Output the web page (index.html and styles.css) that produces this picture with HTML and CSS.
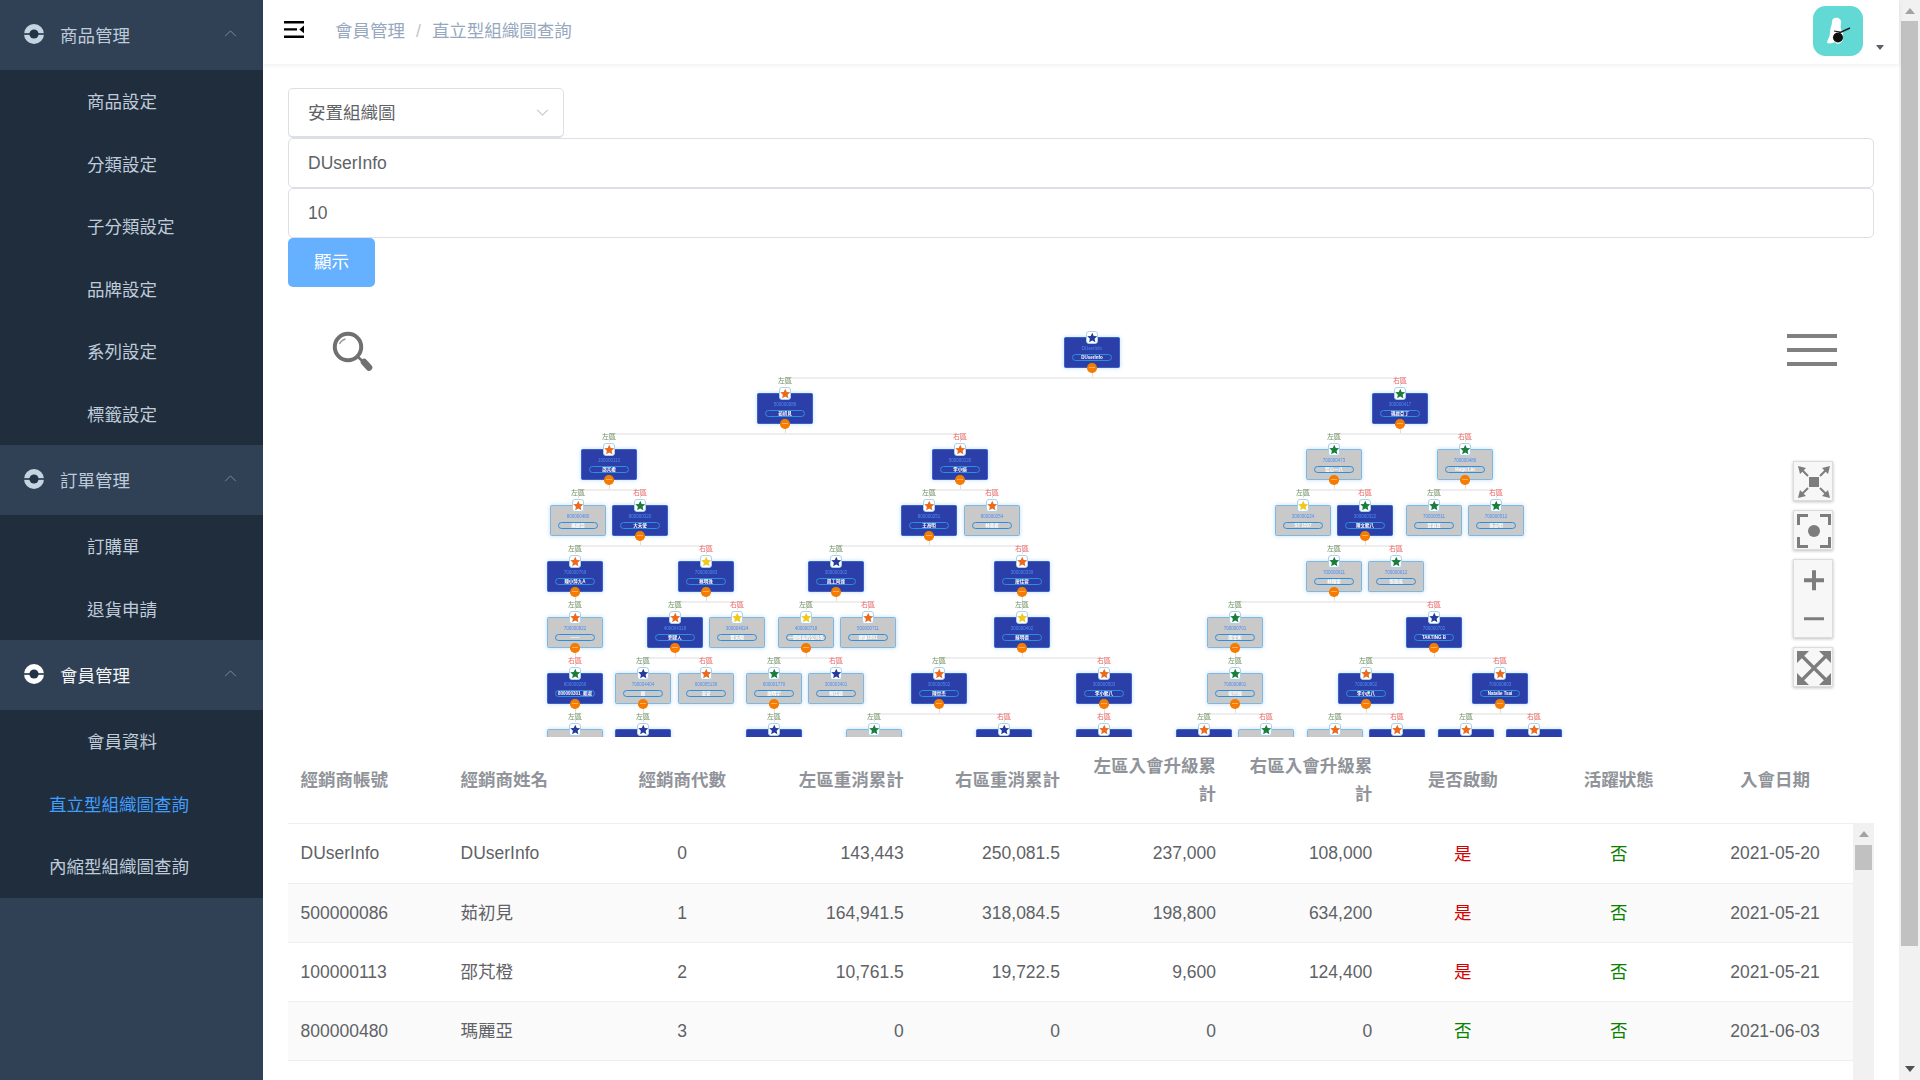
FILE: index.html
```html
<!DOCTYPE html>
<html lang="zh-Hant">
<head>
<meta charset="utf-8">
<title>直立型組織圖查詢</title>
<link rel="stylesheet" href="styles.css">
</head>
<body>
<div class="app">
  <aside class="sidebar">
    <div class="menu-title"><svg class="help" viewBox="0 0 20 20"><use href="#ring"/></svg><span>商品管理</span><svg class="chev" viewBox="0 0 14 8"><path d="M1 7l6-6 6 6"/></svg></div>
    <ul class="submenu">
      <li>商品設定</li><li>分類設定</li><li>子分類設定</li><li>品牌設定</li><li>系列設定</li><li>標籤設定</li>
    </ul>
    <div class="menu-title"><svg class="help" viewBox="0 0 20 20"><use href="#ring"/></svg><span>訂單管理</span><svg class="chev" viewBox="0 0 14 8"><path d="M1 7l6-6 6 6"/></svg></div>
    <ul class="submenu">
      <li>訂購單</li><li>退貨申請</li>
    </ul>
    <div class="menu-title current"><svg class="help" viewBox="0 0 20 20"><use href="#ring"/></svg><span>會員管理</span><svg class="chev" viewBox="0 0 14 8"><path d="M1 7l6-6 6 6"/></svg></div>
    <ul class="submenu">
      <li>會員資料</li><li class="wide active">直立型組織圖查詢</li><li class="wide">內縮型組織圖查詢</li>
    </ul>
  </aside>

  <div class="main">
    <header class="navbar">
      <svg class="hamburger" viewBox="0 0 20 17"><path d="M0 0h20v2.400H0zM0 7.200h13v2.400H0zM0 14.600h20V17H0z"/><path d="M20 4.600v7.600l-4.600-3.800z"/></svg>
      <nav class="crumbs"><span>會員管理</span><i>/</i><span>直立型組織圖查詢</span></nav>
      <div class="user">
        <div class="avatar">
          <svg viewBox="0 0 50 50"><path d="M22 12C26 11 29 14 28 18C27 21 28 24 30 27L30 34C28 38 24 39 22 36C20 37 17 38 14 37C14 34 17 31 17 27C17 22 19 19 19 16C19 14 20 12 22 12z" fill="#fff"/><circle cx="25" cy="31.500" r="5" fill="#111"/><path d="M26 27l11-5" stroke="#222" stroke-width="1.400"/><path d="M21 25l6 1" stroke="#111" stroke-width="1.200"/></svg>
        </div>
        <i class="caret"></i>
      </div>
    </header>

    <section class="content">
      <form class="filters">
        <div class="field select"><span class="select-text">安置組織圖</span><svg class="down" viewBox="0 0 14 8"><path d="M1 1l6 6 6-6"/></svg></div>
        <div class="field">DUserInfo</div>
        <div class="field">10</div>
        <button type="button" class="btn">顯示</button>
      </form>

      <div class="chart">
        <div class="tree" id="tree"></div>
        <svg class="search" viewBox="0 0 44 44"><circle cx="17" cy="17" r="13.200" fill="none" stroke="#707070" stroke-width="4"/><path d="M8.500 14a9 9 0 0 1 6-5" fill="none" stroke="#999" stroke-width="1.400"/><path d="M27 27l6 5.500" stroke="#707070" stroke-width="2.600"/><path d="M33 32l5 5.500" stroke="#707070" stroke-width="6.600" stroke-linecap="round"/></svg>
        <div class="bars"><i></i><i></i><i></i></div>
        <div class="tools">
          <div class="tool"><svg viewBox="0 0 38 38"><rect x="15" y="15" width="10" height="10"/><g stroke="#7d7d7d" stroke-width="2"><path d="M8 8l6 6M32 8l-6 6M8 32l6-6M32 32l-6-6"/></g><path d="M4 4l8 2-6 6zM36 4l-2 8-6-6zM4 36l2-8 6 6zM36 36l-8-2 6-6z"/></svg></div>
          <div class="tool"><svg viewBox="0 0 38 38"><circle cx="20" cy="20" r="6"/><path d="M3 3h11v3H6v8H3zM37 3v11h-3V6h-8V3zM3 37V26h3v8h8v3zM37 37H26v-3h8v-8h3z"/></svg></div>
          <div class="tool-pair">
            <svg viewBox="0 0 38 38"><path d="M18 10h4v8h8v4h-8v8h-4v-8h-8v-4h8z"/></svg>
            <svg viewBox="0 0 38 38"><path d="M10 18h20v3H10z"/></svg>
          </div>
          <div class="tool"><svg viewBox="0 0 38 38"><path d="M5 5l30 30M35 5L5 35" stroke="#7d7d7d" stroke-width="3.200"/><path d="M3 3h12L3 15zM37 3v12L25 3zM3 37V25l12 12zM37 37H25l12-12z"/></svg></div>
        </div>
      </div>

      <div class="table-wrap">
        <table class="grid">
          <colgroup><col class="c-first"><col><col><col><col><col><col><col><col><col></colgroup>
          <thead>
            <tr><th>經銷商帳號</th><th>經銷商姓名</th><th class="mid">經銷商代數</th><th class="end">左區重消累計</th><th class="end">右區重消累計</th><th class="end">左區入會升級累計</th><th class="end">右區入會升級累計</th><th class="mid">是否啟動</th><th class="mid">活躍狀態</th><th class="mid">入會日期</th></tr>
          </thead>
          <tbody>
            <tr class="first"><td>DUserInfo</td><td>DUserInfo</td><td class="mid">0</td><td class="end">143,443</td><td class="end">250,081.5</td><td class="end">237,000</td><td class="end">108,000</td><td class="mid yes">是</td><td class="mid no">否</td><td class="mid">2021-05-20</td></tr>
            <tr class="alt"><td>500000086</td><td class="han">茹初見</td><td class="mid">1</td><td class="end">164,941.5</td><td class="end">318,084.5</td><td class="end">198,800</td><td class="end">634,200</td><td class="mid yes">是</td><td class="mid no">否</td><td class="mid">2021-05-21</td></tr>
            <tr><td>100000113</td><td class="han">邵芃橙</td><td class="mid">2</td><td class="end">10,761.5</td><td class="end">19,722.5</td><td class="end">9,600</td><td class="end">124,400</td><td class="mid yes">是</td><td class="mid no">否</td><td class="mid">2021-05-21</td></tr>
            <tr class="alt"><td>800000480</td><td class="han">瑪麗亞</td><td class="mid">3</td><td class="end">0</td><td class="end">0</td><td class="end">0</td><td class="end">0</td><td class="mid no">否</td><td class="mid no">否</td><td class="mid">2021-06-03</td></tr>
          </tbody>
        </table>
        <div class="mini-scroll"><b class="up"></b><span class="mini-thumb"></span></div>
      </div>
    </section>
  </div>

  <div class="page-scroll"><b class="up"></b><span class="thumb"></span><b class="dn"></b></div>
</div>

<svg class="defs" width="0" height="0"><defs>
  <g id="ring"><circle cx="10" cy="10" r="10" fill="currentColor"/><circle cx="10" cy="10" r="4.600" fill="#243447"/><path d="M0 9.200h20v1.600H0z" fill="#243447"/></g>
</defs></svg>
<script src="app.js"></script>
</body>
</html>
```
FILE: styles.css
```css
* { box-sizing: border-box; }
html, body { margin: 0; height: 100%; overflow: hidden; }
body { font: 17.5px "Liberation Sans", "Noto Sans CJK TC", sans-serif; color: #606266; background: #fff; }
.app { display: flex; height: 1080px; }
.defs { position: absolute; }

.sidebar { width: 263px; flex: none; background: #304156; color: #bfcbd9; }
.menu-title { height: 70px; display: flex; align-items: center; padding: 0 26px 2px 24px; gap: 16px; background: #304156; }
.menu-title.current { color: #f4f4f5; }
.help { width: 20px; height: 20px; color: #c6d3e0; flex: none; }
.current .help { color: #fff; }
.chev { width: 13px; height: 7px; margin-left: auto; margin-top: -2px; fill: none; stroke: #7f8b98; stroke-width: 1.1; }
.submenu { list-style: none; margin: 0; padding: 0; background: #1f2d3d; }
.submenu li { height: 62.5px; line-height: 64px; padding-left: 87px; }
.submenu li.wide { padding-left: 49px; }
.submenu li.active { color: #409eff; }

.main { flex: 1; min-width: 0; display: flex; flex-direction: column; }
.navbar { height: 64px; flex: none; display: flex; align-items: center; padding-left: 21px; box-shadow: 0 1px 5px rgba(0,21,41,.08); position: relative; z-index: 2; }
.hamburger { width: 20px; height: 17px; margin-top: -5px; flex: none; }
.crumbs { margin-left: 31px; display: flex; align-items: baseline; gap: 11px; color: #97a8be; margin-top: -5px; }
.crumbs i { font-style: normal; color: #c0c4cc; }
.user { margin-left: auto; display: flex; align-items: flex-end; margin-right: 15.5px; height: 50px; margin-top: -3px; }
.avatar { width: 50px; height: 50px; border-radius: 12.5px; background: #62d9d5; overflow: hidden; }
.avatar svg { display: block; width: 50px; height: 50px; }
.caret { width: 0; height: 0; margin: 0 0 6px 12.5px; border: 4.5px solid transparent; border-top: 5.5px solid #5a5e66; border-bottom: 0; }

.content { flex: 1; min-height: 0; padding: 24px 25.5px 0 25px; display: flex; flex-direction: column; }
.filters { display: flex; flex-direction: column; align-items: flex-start; flex: none; }
.field { width: 100%; height: 50px; border: 1px solid #dcdfe6; border-radius: 5px; padding: 0 19px; line-height: 48px; background: #fff; }
.field.select { width: 276px; display: flex; align-items: center; justify-content: space-between; padding-right: 14px; line-height: normal; border-bottom-width: 2px; }
.select-text { padding-bottom: 2px; }
.down { width: 13px; height: 7px; fill: none; stroke: #c0c4cc; stroke-width: 1.2; }
.btn { width: 87px; height: 49px; border: 0; border-radius: 5px; background: #66b1ff; color: #fff; font: inherit; padding: 0 0 4px; }

.chart { position: relative; height: 450px; flex: none; overflow: hidden; }
.tree { position: absolute; inset: 0; filter: blur(.35px); }
.link { position: absolute; background: #eeeeee; }
.link.drop { background: #dedede; }
.node { position: absolute; width: 56.5px; height: 31px; border-radius: 1.5px; color: #fff; text-align: center; box-shadow: 0 0 4px rgba(64,158,255,.35); }
.node.on { background: #2c3fa8; border: 1px solid #3a62c4; }
.node.off { background: #c9c9c9; border: 1px solid #7fb8dc; }
.code { position: absolute; left: 0; right: 0; top: 8px; font-size: 4.5px; line-height: 6px; color: #4d8df0; }
.name { position: absolute; left: 7.5px; right: 7.5px; top: 15.5px; height: 7.5px; border: 1px solid #2b8fe0; border-radius: 4px; font-size: 4.5px; font-weight: 700; line-height: 5.5px; white-space: nowrap; overflow: hidden; }
.badge { position: absolute; width: 12.5px; height: 12.5px; left: 21px; top: -7px; background: #fff; border: 1px solid #a9d2ea; border-radius: 3px; display: flex; align-items: center; justify-content: center; }
.badge svg { width: 11px; height: 11px; display: block; }
.node-label { position: absolute; width: 20px; left: 17.25px; top: -19px; font-size: 7px; line-height: 12px; text-align: center; }
.node-label.l { color: #6b8f5e; }
.node-label.r { color: #ee6060; }
.toggle { position: absolute; width: 9.5px; height: 9.5px; left: 22.5px; bottom: -5.5px; border-radius: 50%; background: #f57c00; }
.toggle::after { content: ""; position: absolute; left: 2px; right: 2px; top: 4.2px; height: 1px; background: #ffb066; }

.search { position: absolute; left: 43px; top: 43px; width: 44px; height: 44px; }
.bars { position: absolute; left: 1499px; top: 47px; width: 50px; display: flex; flex-direction: column; gap: 10.5px; }
.bars i { display: block; height: 3.5px; background: #808080; }
.tools { position: absolute; left: 1505px; top: 174px; display: flex; flex-direction: column; }
.tool, .tool-pair { width: 40px; background: #f7f7f7; border: 1px solid #dcdcdc; box-shadow: 0 1px 3px rgba(0,0,0,.25); }
.tool { height: 40px; margin-bottom: 9px; }
.tool-pair { height: 79px; margin-bottom: 9px; }
.tool svg, .tool-pair svg { display: block; width: 38px; height: 38px; fill: #7d7d7d; }
.tool-pair svg { height: 38.5px; }

.table-wrap { position: relative; flex: 1; min-height: 0; overflow: hidden; }
.grid { width: 1565px; table-layout: fixed; border-collapse: collapse; }
.c-first { width: 160px; }
.grid th, .grid td { padding: 0 12.5px; border-bottom: 1px solid #ebeef5; font-weight: 400; vertical-align: middle; text-align: left; }
.grid th { height: 86.3px; color: #909399; font-weight: 700; line-height: 28px; }
.grid td { height: 59px; padding-top: 1px; }
.grid .first td { height: 60px; }
.grid .alt td { background: #fafafa; }
.grid .mid { text-align: center; }
.grid .end { text-align: right; }
.grid .yes, .grid .no, .grid .han { padding-top: 0; padding-bottom: 2px; }
.grid .yes { color: #d60000; }
.grid .no { color: #0a8000; }

.mini-scroll { position: absolute; left: 1565px; top: 86px; bottom: 0; width: 21px; background: #f1f1f1; display: flex; flex-direction: column; align-items: center; }
.mini-thumb { width: 17px; height: 25px; margin-top: 8px; background: #c1c1c1; }
.up, .dn { display: block; width: 0; height: 0; border: 5px solid transparent; }
.up { border-top: 0; border-bottom: 6px solid #a3a3a3; }
.mini-scroll .up { margin-top: 8px; }
.page-scroll { width: 21px; flex: none; background: #f1f1f1; display: flex; flex-direction: column; align-items: center; position: relative; }
.page-scroll .up { margin-top: 8px; }
.thumb { width: 17px; height: 925px; margin-top: 7px; background: #c1c1c1; }
.dn { position: absolute; bottom: 8px; border-bottom: 0; border-top: 6px solid #505050; }
```
FILE: app.js
```js
// row, centre x, parent x, tone (on/off), star, side, code, name
var NODES = [
  [0,1092,0,'on','n','','DUserInfo','DUserInfo'],
  [1,785,1092,'on','o','l','500000086','茹初見'],
  [1,1400,1092,'on','g','r','300000417','瑪麗亞丁'],
  [2,609,785,'on','o','l','100000113','邵芃橙'],
  [2,960,785,'on','o','r','500000130','李小娟'],
  [2,1334,1400,'off','g','l','700000473','葉心一八'],
  [2,1465,1400,'off','g','r','700000480','Hugo Liu'],
  [3,578,609,'off','o','l','800000480','瑪麗亞'],
  [3,640,609,'on','g','r','800000320','大天使'],
  [3,929,960,'on','o','l','800000251','王海明'],
  [3,992,960,'off','o','r','800000254','林美君'],
  [3,1303,1334,'off','y','l','300000224','ST 1507'],
  [3,1365,1334,'on','g','r','300000322','陳文龍八'],
  [3,1434,1465,'off','g','l','700000511','黃淑真'],
  [3,1496,1465,'off','g','r','700000512','吳志明'],
  [4,575,640,'on','o','l','700000769','陳小萍九A'],
  [4,706,640,'on','y','r','700000083','蔡明珠'],
  [4,836,929,'on','n','l','300000302','鳳工阿達'],
  [4,1022,929,'on','o','r','300000330','廖佳蓉'],
  [4,1334,1365,'off','g','l','700000611','林雅雯'],
  [4,1396,1365,'off','g','r','700000612','張育成'],
  [5,575,575,'off','o','l','700000822','——'],
  [5,675,706,'on','o','l','400004318','劉建人'],
  [5,737,706,'off','y','r','300004024','雷天翔'],
  [5,806,836,'off','y','l','400000718','一個很長的公司名'],
  [5,868,836,'off','o','r','500000711','健康1801'],
  [5,1022,1022,'on','y','l','300000402','蘇明德'],
  [5,1235,1334,'off','g','l','700000701','周文彬'],
  [5,1434,1334,'on','n','r','700000702','TAKTING B'],
  [6,575,575,'on','g','r','800000266','800000301_賴淑'],
  [6,643,675,'off','n','l','700004404','蘇'],
  [6,706,675,'off','o','r','600005136','安安'],
  [6,774,806,'off','g','l','600001770','謝明宇'],
  [6,836,806,'off','n','r','300003401','蔡佳穎'],
  [6,939,1022,'on','o','l','300000502','陳世杰'],
  [6,1104,1022,'on','o','r','300000503','李小龍八'],
  [6,1235,1235,'off','g','l','700000801','楊宗翰'],
  [6,1366,1434,'on','o','l','700000802','李小虎八'],
  [6,1500,1434,'on','o','r','700000803','Natalie Tsai'],
  [7,575,575,'off','n','l','',''],
  [7,643,643,'on','n','l','',''],
  [7,774,774,'on','n','l','',''],
  [7,874,939,'off','g','l','',''],
  [7,1004,939,'on','n','r','',''],
  [7,1104,1104,'on','o','r','',''],
  [7,1204,1235,'on','o','l','',''],
  [7,1266,1235,'off','g','r','',''],
  [7,1335,1366,'off','o','l','',''],
  [7,1397,1366,'on','o','r','',''],
  [7,1466,1500,'on','o','l','',''],
  [7,1534,1500,'on','o','r','','']
];
var STAR = { n: '#253a9c', o: '#ea6a1e', g: '#1a7d3c', y: '#f2c81e' };
var ORIGIN_X = 288, ORIGIN_Y = 287, ROW0 = 337.3, ROW_H = 56, W = 56.5, H = 31;
var tree = document.getElementById('tree');

function topOf(row) { return ROW0 + row * ROW_H - ORIGIN_Y; }

function line(cls, l, t, w, h) {
  var el = document.createElement('div');
  el.className = cls;
  el.style.left = l + 'px';
  el.style.top = t + 'px';
  el.style.width = w + 'px';
  el.style.height = h + 'px';
  tree.appendChild(el);
}

var parents = {};
NODES.forEach(function (n) {
  if (n[0] === 0) return;
  var key = (n[0] - 1) + ':' + n[2];
  (parents[key] = parents[key] || []).push(n);
});

Object.keys(parents).forEach(function (key) {
  var p = key.split(':'), row = +p[0], px = +p[1] - ORIGIN_X;
  var bar = topOf(row) + H + 9;
  var xs = parents[key].map(function (c) { return c[1] - ORIGIN_X; }).concat(px);
  var min = Math.min.apply(null, xs), max = Math.max.apply(null, xs);
  line('link drop', px - 0.5, bar - 9, 1, 9);
  if (max > min) line('link', min, bar, max - min, 2);
  parents[key].forEach(function (c) { line('link drop', c[1] - ORIGIN_X - 0.5, bar, 1, 9); });
});

NODES.forEach(function (n) {
  var el = document.createElement('div');
  el.className = 'node ' + n[3];
  el.style.left = (n[1] - ORIGIN_X - W / 2) + 'px';
  el.style.top = topOf(n[0]) + 'px';
  var html = '';
  if (n[5]) html += '<div class="node-label ' + n[5] + '">' + (n[5] === 'l' ? '左區' : '右區') + '</div>';
  html += '<div class="badge"><svg viewBox="0 0 24 24"><path fill="' + STAR[n[4]] + '" d="M12 1l3.400 7.400 8 .9-6 5.400 1.700 7.900L12 18.600 4.900 22.600l1.700-7.900-6-5.400 8-.9z"/></svg></div>';
  if (n[6]) html += '<div class="code">' + n[6] + '</div><div class="name">' + n[7] + '</div>';
  if (parents[n[0] + ':' + n[1]]) html += '<div class="toggle"></div>';
  el.innerHTML = html;
  tree.appendChild(el);
});
```
